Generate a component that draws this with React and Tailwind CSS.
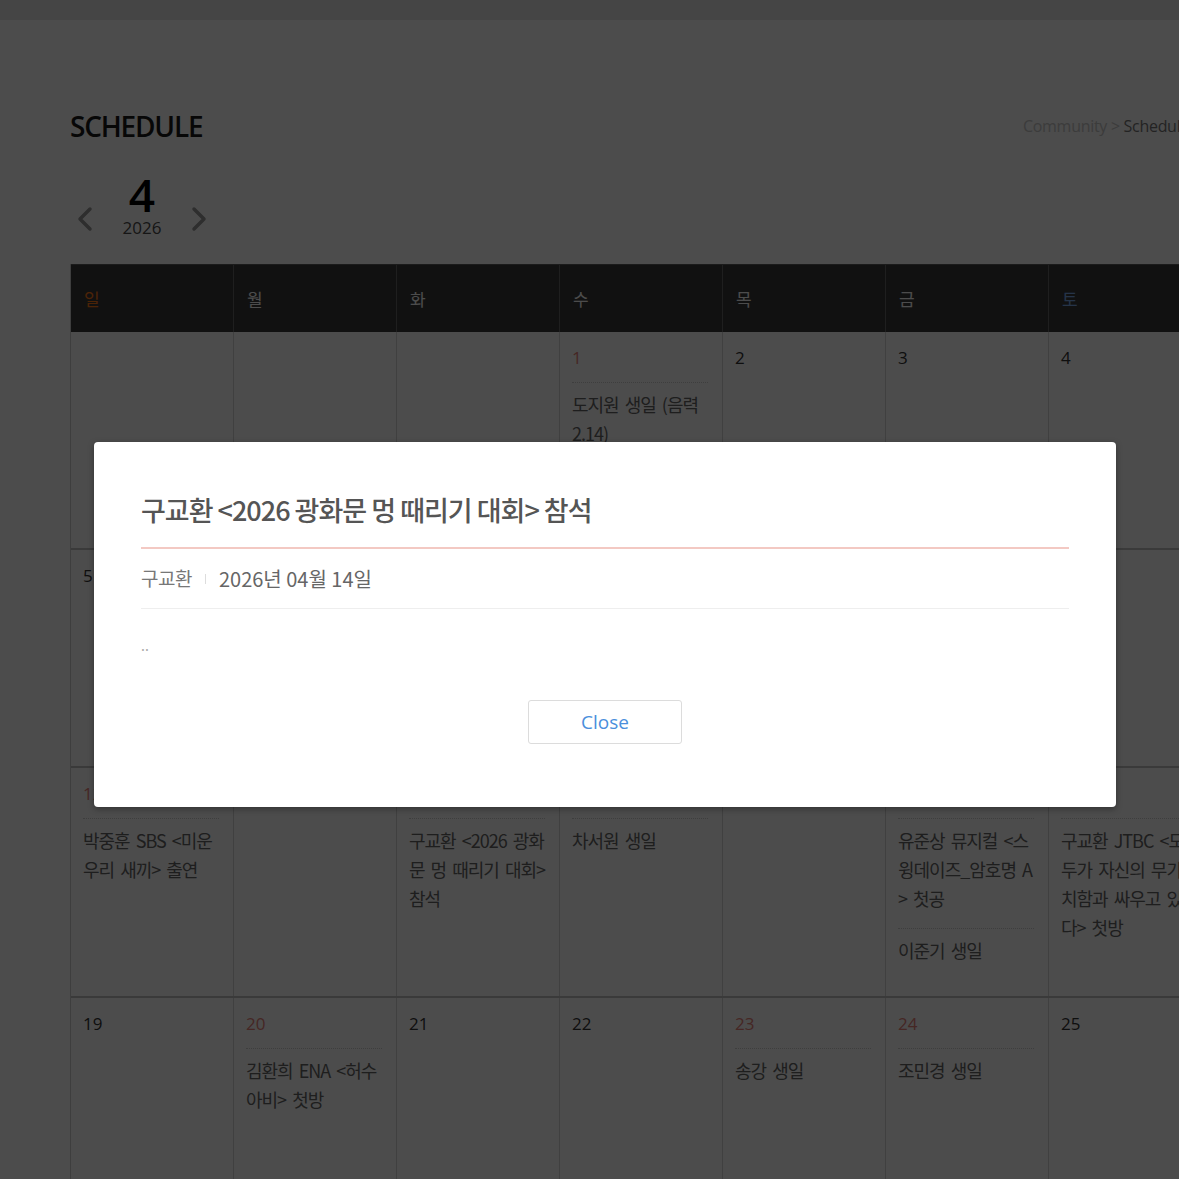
const days = [
    { label: '일', color: 'text-[#ff7a1a]' },
    { label: '월', color: 'text-white' },
    { label: '화', color: 'text-white' },
    { label: '수', color: 'text-white' },
    { label: '목', color: 'text-white' },
    { label: '금', color: 'text-white' },
    { label: '토', color: 'text-[#7fb0f0]' },
];

// one entry per cell, null = blank day before the 1st
const weeks = [
    [null, null, null,
        { d: 1, events: ['도지원 생일 (음력 2.14)'] },
        { d: 2 }, { d: 3 }, { d: 4 }],
    [{ d: 5 }, { d: 6 }, { d: 7 }, { d: 8 }, { d: 9 }, { d: 10 }, { d: 11 }],
    [
        { d: 12, events: ['박중훈 SBS <미운 우리 새끼> 출연'] },
        { d: 13 },
        { d: 14, events: ['구교환 <2026 광화문 멍 때리기 대회> 참석'] },
        { d: 15, events: ['차서원 생일'] },
        { d: 16 },
        { d: 17, events: ['유준상 뮤지컬 <스윙데이즈_암호명 A > 첫공', '이준기 생일'] },
        { d: 18, events: ['구교환 JTBC <모두가 자신의 무가치함과 싸우고 있다> 첫방'] },
    ],
    [
        { d: 19 },
        { d: 20, events: ['김환희 ENA <허수아비> 첫방'] },
        { d: 21 },
        { d: 22 },
        { d: 23, events: ['송강 생일'] },
        { d: 24, events: ['조민경 생일'] },
        { d: 25 },
    ],
];

const Chevron = ({ dir }) => (
    <svg width="18" height="26" viewBox="0 0 18 26" fill="none">
        <polyline
            points={dir === 'left' ? '14,3 4,13 14,23' : '4,3 14,13 4,23'}
            stroke="#9a9a9a"
            strokeWidth="3.5"
            strokeLinecap="round"
            strokeLinejoin="round"
        />
    </svg>
);

const DayCell = ({ cell }) => {
    const hasEvents = cell && cell.events && cell.events.length > 0;
    return (
        <div className="border-r border-[#d8d8d8] pl-[12px] pr-[14px] pt-[14px] pb-[16px]">
            {cell && (
                <div
                    className={`h-[24px] leading-[24px] text-[17px] font-['Open_Sans',sans-serif] ${hasEvents ? 'text-[#e8827a] mb-[12px]' : 'text-[#333]'}`}
                >
                    {cell.d}
                </div>
            )}
            {hasEvents &&
                cell.events.map((ev, i) => (
                    <div
                        key={i}
                        className="border-t border-dotted border-[#cfcfcf] pt-[7px] pb-[15px] text-[18px] leading-[29px] tracking-[-1px] [word-spacing:3px] text-[#666] font-['Noto_Sans_CJK_KR',sans-serif]"
                    >
                        {ev}
                    </div>
                ))}
        </div>
    );
};

const App = () => {
    return (
        <div className="relative w-[1179px] h-[1179px] overflow-hidden bg-white font-['Open_Sans','Noto_Sans_CJK_KR',sans-serif]">
            <div className="h-[20px] bg-[#e6e6e6]" />

            <div className="w-[1400px] pl-[70px]">
                {/* title + breadcrumb */}
                <div className="flex items-center h-[56px] mt-[78px]">
                    <h1 className="w-[953px] text-[28px] font-semibold tracking-[-1.2px] text-[#1a1a1a] leading-none">
                        SCHEDULE
                    </h1>
                    <div className="text-[16px] text-[#c8c8c8] tracking-[-0.3px]">
                        Community <span className="text-[#c8c8c8]">&gt;</span>{' '}
                        <span className="text-[#777]">Schedule</span>
                    </div>
                </div>

                {/* month switcher */}
                <div className="flex items-center h-[81px] mt-[7px] mb-[22px]">
                    <div className="pt-[34px] pl-[6px]">
                        <Chevron dir="left" />
                    </div>
                    <div className="flex flex-col items-center w-[96px] pt-[6px]">
                        <div className="text-[46px] font-semibold leading-[46px] text-black">4</div>
                        <div className="text-[17px] leading-[22px] text-[#4a4a4a]">2026</div>
                    </div>
                    <div className="pt-[34px]">
                        <Chevron dir="right" />
                    </div>
                </div>

                {/* calendar */}
                <div className="w-[1141px] border-l border-[#cfcfcf]">
                    <div className="grid grid-cols-[repeat(7,163px)] h-[68px] bg-[#393939] border-t border-[#5a5a5a]">
                        {days.map(day => (
                            <div
                                key={day.label}
                                className={`flex items-center pl-[13px] border-r border-[#6a6a6a] text-[17px] font-['Noto_Sans_CJK_KR',sans-serif] ${day.color}`}
                            >
                                {day.label}
                            </div>
                        ))}
                    </div>
                    {weeks.map((week, wi) => (
                        <div
                            key={wi}
                            className="grid grid-cols-[repeat(7,163px)] min-h-[218px] border-b-2 border-[#c4c4c4]"
                        >
                            {week.map((cell, ci) => (
                                <DayCell key={ci} cell={cell} />
                            ))}
                        </div>
                    ))}
                </div>
            </div>

            {/* dim overlay */}
            <div className="absolute inset-0 bg-black/70" />

            {/* modal */}
            <div className="absolute left-[94px] top-[442px] w-[1022px] h-[365px] bg-white rounded-[4px] shadow-[0_2px_6px_rgba(0,0,0,0.35)] px-[47px] pt-[50px] font-['Noto_Sans_CJK_KR',sans-serif]">
                <div className="border-b-2 border-[#f3c9c3] pb-[19px]">
                    <h2 className="text-[27px] leading-[36px] font-medium tracking-[-1px] text-[#555]">
                        구교환 &lt;2026 광화문 멍 때리기 대회&gt; 참석
                    </h2>
                </div>
                <div className="flex items-center h-[60px] border-b border-[#eeeeee] text-[#777]">
                    <span className="text-[19px] tracking-[-0.5px]">구교환</span>
                    <span className="mx-[13px] h-[10px] w-px bg-[#dddddd]" />
                    <span className="text-[20px] text-[#666]">2026년 04월 14일</span>
                </div>
                <div className="pt-[24px] leading-[24px] text-[14px] text-[#aaa]">..</div>
                <div className="flex justify-center mt-[43px]">
                    <button className="w-[154px] h-[44px] border border-[#dcdcdc] rounded-[3px] bg-white text-[19px] text-[#4a8fdc] font-['Open_Sans',sans-serif]">
                        Close
                    </button>
                </div>
            </div>
        </div>
    );
};

export default App;
